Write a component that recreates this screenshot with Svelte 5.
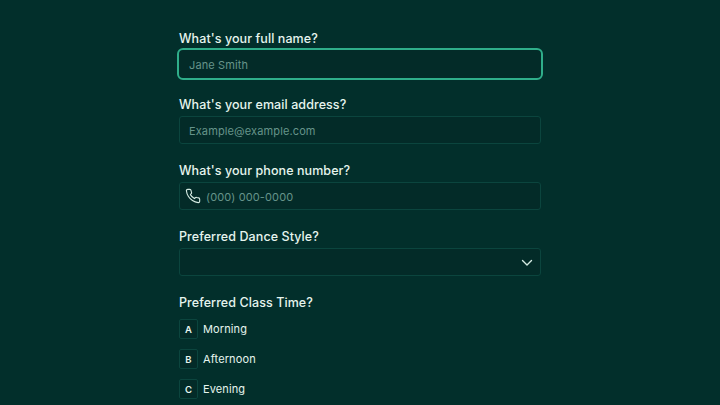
<script>
  const times = [
    { key: 'A', label: 'Morning' },
    { key: 'B', label: 'Afternoon' },
    { key: 'C', label: 'Evening' }
  ];
</script>

<main class="form">
  <div class="field">
    <label for="name">What's your full name?</label>
    <input id="name" class="focused" type="text" placeholder="Jane Smith" />
  </div>

  <div class="field">
    <label for="email">What's your email address?</label>
    <input id="email" type="text" placeholder="Example@example.com" />
  </div>

  <div class="field">
    <label for="phone">What's your phone number?</label>
    <div class="phone">
      <svg width="16" height="16" viewBox="0 0 24 24" fill="none" stroke="currentColor" stroke-width="1.7" stroke-linecap="round" stroke-linejoin="round">
        <path d="M22 16.9v3a2 2 0 0 1-2.2 2 19.8 19.8 0 0 1-8.6-3.1 19.5 19.5 0 0 1-6-6 19.8 19.8 0 0 1-3.1-8.7A2 2 0 0 1 4.1 2h3a2 2 0 0 1 2 1.7c.1 1 .4 1.9.7 2.8a2 2 0 0 1-.5 2.1L8.1 9.9a16 16 0 0 0 6 6l1.3-1.3a2 2 0 0 1 2.1-.4c.9.3 1.8.6 2.8.7a2 2 0 0 1 1.7 2z" />
      </svg>
      <input id="phone" type="text" placeholder="(000) 000-0000" />
    </div>
  </div>

  <div class="field">
    <label for="style">Preferred Dance Style?</label>
    <button id="style" class="select" type="button" aria-label="Preferred Dance Style">
      <svg width="12" height="8" viewBox="0 0 12 8" fill="none" stroke="currentColor" stroke-width="1.4" stroke-linecap="round" stroke-linejoin="round">
        <path d="M1.5 1.5 6 6l4.5-4.5" />
      </svg>
    </button>
  </div>

  <div class="field">
    <p class="label">Preferred Class Time?</p>
    <ul class="options">
      {#each times as t (t.key)}
        <li>
          <span class="key">{t.key}</span>
          <span>{t.label}</span>
        </li>
      {/each}
    </ul>
  </div>
</main>

<style>
  :global(body) {
    background: #022f2b;
    overflow: hidden;
  }
  .form {
    box-sizing: border-box;
    width: 362px;
    margin: 0 auto;
    padding-top: 28px;
    display: flex;
    flex-direction: column;
    gap: 16px;
    color: #e6f5ee;
    font-family: Inter, Lato, sans-serif;
  }
  .field {
    display: flex;
    flex-direction: column;
  }
  label,
  .label {
    display: block;
    margin: 0 0 2px;
    height: 20px;
    line-height: 21px;
    font-size: 12.5px;
    font-weight: 500;
    letter-spacing: 0.08px;
  }
  input {
    box-sizing: border-box;
    width: 100%;
    height: 28px;
    padding: 1px 9px 0;
    background: #032b28;
    border: 1px solid #0b453e;
    border-radius: 3px;
    color: #e6f5ee;
    font: inherit;
    font-size: 11px;
    letter-spacing: 0.12px;
    outline: none;
  }
  input::placeholder {
    color: #66948a;
    opacity: 1;
  }
  .focused {
    border-color: #032b28;
    outline: 2px solid #2fae8a;
    outline-offset: 0.5px;
    border-radius: 4px;
  }
  .phone {
    display: flex;
    align-items: center;
    gap: 5px;
    height: 28px;
    box-sizing: border-box;
    padding-left: 5px;
    background: #032b28;
    border: 1px solid #0b453e;
    border-radius: 3px;
    color: #d5ebe3;
  }
  .phone input {
    flex: 1;
    height: 26px;
    padding: 1px 0 0;
    background: none;
    border: none;
  }
  .select {
    display: flex;
    align-items: center;
    justify-content: flex-end;
    box-sizing: border-box;
    width: 100%;
    height: 28px;
    padding: 1px 7px 0 0;
    background: #032b28;
    border: 1px solid #0b453e;
    border-radius: 3px;
    color: #d5ebe3;
  }
  .options {
    list-style: none;
    margin: 5px 0 0;
    padding: 0;
    display: flex;
    flex-direction: column;
    gap: 10px;
  }
  .options li {
    display: flex;
    align-items: center;
    gap: 5px;
    font-size: 11px;
    letter-spacing: 0.12px;
  }
  .key {
    box-sizing: border-box;
    width: 19px;
    height: 20px;
    display: flex;
    align-items: center;
    justify-content: center;
    background: #032b28;
    border: 1px solid #0b453e;
    border-radius: 2px;
    font-size: 9.5px;
    font-weight: 600;
    letter-spacing: 0;
  }
</style>
